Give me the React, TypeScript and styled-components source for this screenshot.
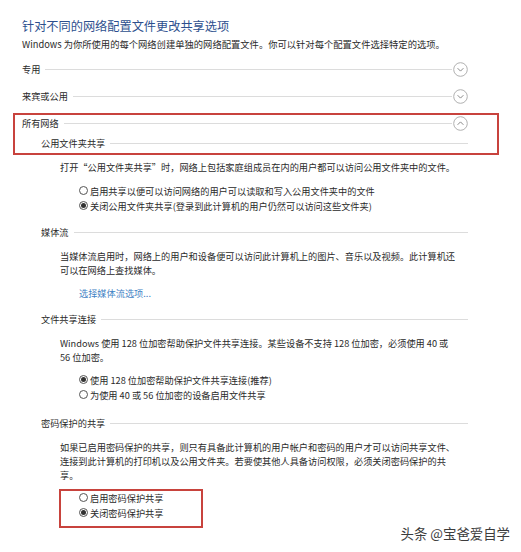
import React from "react";
import styled, { createGlobalStyle } from "styled-components";

const GlobalStyle = createGlobalStyle`
  html, body { margin: 0; padding: 0; background: #ffffff; }
  body {
    font-family: "Noto Sans CJK SC", "Microsoft YaHei", "Noto Sans", sans-serif;
    color: #2a2a2a;
  }
`;

const Page = styled.div`
  position: relative;
  width: 521px;
  height: 552px;
  box-sizing: border-box;
  padding: 18px 0 0 22px;
  overflow: hidden;
  display: flex;
  flex-direction: column;
`;

const Title = styled.div`
  font-size: 12.2px;
  line-height: 16px;
  color: #2d4f8e;
  white-space: nowrap;
`;

const Subtitle = styled.div`
  margin-top: 3px;
  font-size: 9.3px;
  line-height: 14px;
  white-space: nowrap;
`;

const ProfileRow = styled.div<{ $gap: number }>`
  margin-top: ${(p) => p.$gap}px;
  width: 446px;
  height: 16px;
  display: flex;
  align-items: center;
  font-size: 9.2px;
  white-space: nowrap;
`;

const Rule = styled.div`
  flex: 1;
  height: 1px;
  background: #dcdcdc;
  margin-left: 5px;
`;

const SectionHeader = styled.div<{ $gap: number }>`
  margin-top: ${(p) => p.$gap}px;
  margin-left: 19px;
  width: 427px;
  height: 14px;
  display: flex;
  align-items: center;
  font-size: 9.2px;
  white-space: nowrap;
`;

const Para = styled.div<{ $gap: number }>`
  margin-top: ${(p) => p.$gap}px;
  margin-left: 38px;
  font-size: 9.2px;
  line-height: 14px;
  white-space: nowrap;
`;

const RadioList = styled.div<{ $gap: number }>`
  margin-top: ${(p) => p.$gap}px;
  margin-left: 57px;
  display: flex;
  flex-direction: column;
`;

const RadioRow = styled.div`
  height: 15px;
  display: flex;
  align-items: center;
  font-size: 9.2px;
  white-space: nowrap;
`;

const RadioDot = styled.span<{ $checked: boolean }>`
  width: 9px;
  height: 9px;
  box-sizing: border-box;
  border: 1px solid #555;
  border-radius: 50%;
  margin-right: 2px;
  display: flex;
  align-items: center;
  justify-content: center;
  background: #fff;
  &::after {
    content: "";
    display: ${(p) => (p.$checked ? "block" : "none")};
    width: 5px;
    height: 5px;
    border-radius: 50%;
    background: #333;
  }
`;

const Link = styled.div<{ $gap: number }>`
  margin-top: ${(p) => p.$gap}px;
  margin-left: 57px;
  font-size: 9.2px;
  line-height: 14px;
  color: #3f82c4;
  white-space: nowrap;
`;

const Highlight = styled.div<{ $x: number; $y: number; $w: number; $h: number }>`
  position: absolute;
  left: ${(p) => p.$x}px;
  top: ${(p) => p.$y}px;
  width: ${(p) => p.$w}px;
  height: ${(p) => p.$h}px;
  box-sizing: border-box;
  border: 2px solid #c8433d;
  pointer-events: none;
`;

const Watermark = styled.div`
  position: absolute;
  right: 11px;
  top: 524px;
  font-size: 13.4px;
  line-height: 18px;
  color: #3c3c3c;
  white-space: nowrap;
`;

const Chevron: React.FC<{ up?: boolean }> = ({ up }) => (
  <svg width="15" height="15" viewBox="0 0 15 15" style={{ marginLeft: 1, flex: "none" }}>
    <circle cx="7.5" cy="7.5" r="6.8" fill="none" stroke="#b0b0b0" strokeWidth="1" />
    <path
      d={up ? "M4.6 8.8 L7.5 5.9 L10.4 8.8" : "M4.6 6.2 L7.5 9.1 L10.4 6.2"}
      fill="none"
      stroke="#8a8a8a"
      strokeWidth="1"
    />
  </svg>
);

const Radio: React.FC<{ checked?: boolean; children: React.ReactNode }> = ({ checked, children }) => (
  <RadioRow>
    <RadioDot $checked={!!checked} />
    <span>{children}</span>
  </RadioRow>
);

export default function App() {
  return (
    <>
      <GlobalStyle />
      <Page>
        <Title>针对不同的网络配置文件更改共享选项</Title>
        <Subtitle>Windows 为你所使用的每个网络创建单独的网络配置文件。你可以针对每个配置文件选择特定的选项。</Subtitle>

        <ProfileRow $gap={10}>
          专用<Rule /><Chevron />
        </ProfileRow>
        <ProfileRow $gap={11}>
          来宾或公用<Rule /><Chevron />
        </ProfileRow>
        <ProfileRow $gap={11}>
          所有网络<Rule /><Chevron up />
        </ProfileRow>

        <SectionHeader $gap={5}>
          公用文件夹共享<Rule />
        </SectionHeader>
        <Para $gap={10}>打开“公用文件夹共享”时，网络上包括家庭组成员在内的用户都可以访问公用文件夹中的文件。</Para>
        <RadioList $gap={9}>
          <Radio>启用共享以便可以访问网络的用户可以读取和写入公用文件夹中的文件</Radio>
          <Radio checked>关闭公用文件夹共享(登录到此计算机的用户仍然可以访问这些文件夹)</Radio>
        </RadioList>

        <SectionHeader $gap={12}>
          媒体流<Rule />
        </SectionHeader>
        <Para $gap={10}>
          当媒体流启用时，网络上的用户和设备便可以访问此计算机上的图片、音乐以及视频。此计算机还
          <br />
          可以在网络上查找媒体。
        </Para>
        <Link $gap={9}>选择媒体流选项...</Link>

        <SectionHeader $gap={12}>
          文件共享连接<Rule />
        </SectionHeader>
        <Para $gap={10}>
          Windows 使用 128 位加密帮助保护文件共享连接。某些设备不支持 128 位加密，必须使用 40 或
          <br />
          56 位加密。
        </Para>
        <RadioList $gap={8}>
          <Radio checked>使用 128 位加密帮助保护文件共享连接(推荐)</Radio>
          <Radio>为使用 40 或 56 位加密的设备启用文件共享</Radio>
        </RadioList>

        <SectionHeader $gap={14}>
          密码保护的共享<Rule />
        </SectionHeader>
        <Para $gap={10}>
          如果已启用密码保护的共享，则只有具备此计算机的用户帐户和密码的用户才可以访问共享文件、
          <br />
          连接到此计算机的打印机以及公用文件夹。若要使其他人具备访问权限，必须关闭密码保护的共
          <br />
          享。
        </Para>
        <RadioList $gap={8}>
          <Radio>启用密码保护共享</Radio>
          <Radio checked>关闭密码保护共享</Radio>
        </RadioList>

        <Highlight $x={13} $y={113} $w={486} $h={42} />
        <Highlight $x={59} $y={489} $w={144} $h={39} />
        <Watermark>头条 @宝爸爱自学</Watermark>
      </Page>
    </>
  );
}
